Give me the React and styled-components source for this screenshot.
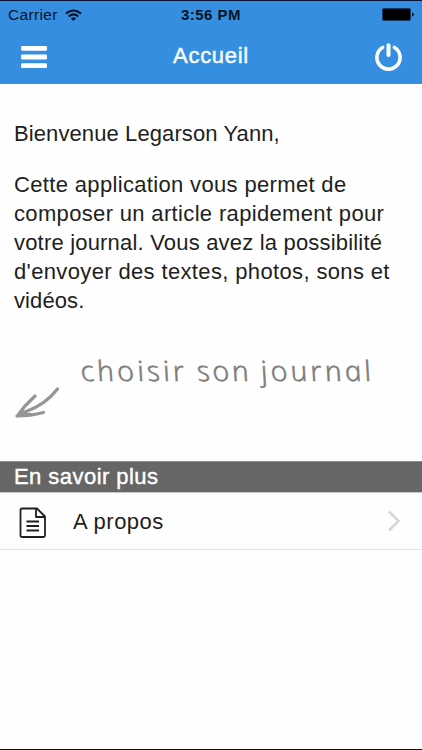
import React from "react";
import styled, { createGlobalStyle } from "styled-components";

const GlobalStyle = createGlobalStyle`
    * {
        box-sizing: border-box;
    }

    body {
        margin: 0;
        background: #fefefe;
        color: #1f1f21;
        font-family: "Liberation Sans", Arial, sans-serif;
    }
`

const Screen = styled.div`
    display: flex;
    flex-direction: column;
    width: 422px;
    height: 750px;
    overflow: hidden;
    border-top: 1px solid #07123a;
    border-bottom: 1px solid #111;
`

const Header = styled.header`
    height: 83px;
    background: #368ee0;
`

const StatusBar = styled.div`
    display: grid;
    grid-template-columns: 1fr auto 1fr;
    align-items: center;
    height: 28px;
    padding: 0 8px;
    color: #071426;
    font-size: 15.5px;
`

const Carrier = styled.div`
    display: flex;
    align-items: center;
    gap: 7px;
    letter-spacing: .35px;
`

const Clock = styled.div`
    padding-bottom: 1px;
    font-weight: bold;
    font-size: 15px;
    letter-spacing: .5px;
`

const Battery = styled.svg`
    justify-self: end;
    margin-bottom: 2px;
`

const NavBar = styled.div`
    display: flex;
    align-items: center;
    justify-content: space-between;
    height: 55px;
    padding: 0 19px 0 20px;
`

const NavButton = styled.button`
    display: flex;
    padding: 0;
    border: 0;
    background: none;
`

const Title = styled.h1`
    margin: 0;
    padding-bottom: 2px;
    color: #f5fbff;
    font-size: 22px;
    font-weight: 400;
    letter-spacing: .7px;
    -webkit-text-stroke: .5px #f5fbff;
`

const Intro = styled.section`
    height: 262px;
    padding: 35px 14px 0;
    font-size: 22px;
    line-height: 29px;
    white-space: nowrap;
`

const Paragraph = styled.p`
    margin: 0 0 22px;
`

const Line = styled.span`
    display: block;
    letter-spacing: ${({spacing}) => spacing}px;
`

const Hint = styled.div`
    display: flex;
    align-items: flex-start;
    height: 115px;
    padding-left: 14px;
`

const Arrow = styled.svg`
    flex: none;
    margin-top: 39px;
`

const HintText = styled.div`
    display: flex;
    gap: 8px;
    margin: 5px 0 0 21px;
    color: #7d7d7d;
    font-family: "Open Sans", sans-serif;
    font-size: 25px;
    font-style: italic;
    font-weight: 300;
    line-height: 40px;
    white-space: nowrap;
    transform: scale(1.2, 1.12) skewX(15deg);
    transform-origin: 0 70%;
    -webkit-text-stroke: .5px #7d7d7d;
`

const Word = styled.span`
    letter-spacing: ${({spacing}) => spacing}px;
`

const SectionTitle = styled.h2`
    height: 32px;
    margin: 0;
    padding-left: 14px;
    border-top: 1px solid #929292;
    border-bottom: 1px solid #c8c8c8;
    background: #666;
    color: #fff;
    font-size: 22px;
    font-weight: 400;
    line-height: 30px;
    letter-spacing: .45px;
    -webkit-text-stroke: .4px #fff;
`

const Row = styled.div`
    display: flex;
    align-items: center;
    height: 57px;
    padding: 0 21px 0 19px;
    border-bottom: 1px solid #e4e4e4;
`

const RowLabel = styled.span`
    flex: 1;
    margin-left: 26px;
    padding-top: 1px;
    font-size: 22px;
    letter-spacing: .5px;
`

const DocIcon = styled.svg`
    margin-top: 4px;
`

const WifiIcon = () => (
    <svg width="17" height="13" viewBox="0 0 17 13" fill="none" stroke="#071426" strokeWidth="2">
        <path d="M1 4.6Q8.5 -1.5 16 4.6M3.7 7.4Q8.5 3.3 13.3 7.4" />
        <path d="M5.9 9.4Q8.5 7.2 11.1 9.4L8.5 12Z" fill="#071426" stroke="none" />
    </svg>
)

const BatteryIcon = () => (
    <Battery width="32" height="13" viewBox="0 0 32 13">
        <rect x="0" y="0" width="29" height="13" rx="2" fill="#123865" />
        <rect x="1" y="1" width="27" height="11" rx="1" fill="#000" />
        <path d="M30 4.5Q32 5 32 6.5T30 8.5Z" fill="#071426" />
    </Battery>
)

const MenuIcon = () => (
    <svg width="28" height="24" viewBox="0 0 28 24" fill="#fff">
        <rect x="1" y="1" width="26" height="4.8" rx="1.2" />
        <rect x="1" y="9.6" width="26" height="4.8" rx="1.2" />
        <rect x="1" y="18.2" width="26" height="4.8" rx="1.2" />
    </svg>
)

const PowerIcon = () => (
    <svg width="29" height="29" viewBox="0 0 29 29" fill="none" stroke="#fff" strokeLinecap="round">
        <path d="M8.6 5.5A11.6 11.6 0 1 0 20.4 5.5" strokeWidth="3.6" />
        <path d="M14.5 3.2V13" strokeWidth="4" />
    </svg>
)

const DocumentIcon = () => (
    <DocIcon width="28" height="32" viewBox="0 0 28 32" fill="none" stroke="#1f1f21" strokeWidth="1.8" strokeLinejoin="round">
        <path d="M3 1.5H18L26 9.5V28.5Q26 30 24.5 30H3Q1.5 30 1.5 28.5V3Q1.5 1.5 3 1.5Z" />
        <path d="M17 2V10H25.5" />
        <path d="M7.5 14.5H20M7.5 19H20M7.5 23.5H20" />
    </DocIcon>
)

const ArrowIcon = () => (
    <Arrow width="47" height="36" viewBox="0 0 47 36" fill="none" stroke="#969696" strokeWidth="3.2" strokeLinecap="round" strokeLinejoin="round">
        <path d="M43.5 4Q31 20 12 26.5L3 31M21 11L11 21Q6 27 3.5 31Q16 31 29.5 27.5" />
        <path d="M2 32L11 22L9 27.5L19 28L14 32Z" fill="#969696" stroke="none" />
    </Arrow>
)

export default class App extends React.Component {
    render () {
        return (
            <Screen>
                <GlobalStyle />
                <Header>
                    <StatusBar>
                        <Carrier>Carrier <WifiIcon /></Carrier>
                        <Clock>3:56 PM</Clock>
                        <BatteryIcon />
                    </StatusBar>
                    <NavBar>
                        <NavButton aria-label="Menu"><MenuIcon /></NavButton>
                        <Title>Accueil</Title>
                        <NavButton aria-label="Quitter"><PowerIcon /></NavButton>
                    </NavBar>
                </Header>
                <Intro>
                    <Paragraph>
                        <Line spacing={.1}>Bienvenue Legarson Yann,</Line>
                    </Paragraph>
                    <Paragraph>
                        <Line spacing={.34}>Cette application vous permet de</Line>
                        <Line spacing={.34}>composer un article rapidement pour</Line>
                        <Line spacing={.19}>votre journal. Vous avez la possibilité</Line>
                        <Line spacing={.36}>d'envoyer des textes, photos, sons et</Line>
                        <Line spacing={.1}>vidéos.</Line>
                    </Paragraph>
                </Intro>
                <Hint>
                    <ArrowIcon />
                    <HintText>
                        <Word spacing={2.6}>choisir</Word>
                        <Word spacing={2.1}>son</Word>
                        <Word spacing={2.5}>journal</Word>
                    </HintText>
                </Hint>
                <SectionTitle>En savoir plus</SectionTitle>
                <Row>
                    <DocumentIcon />
                    <RowLabel>A propos</RowLabel>
                    <svg width="14" height="22" viewBox="0 0 14 22" fill="none" stroke="#d6d6d6" strokeWidth="2.6">
                        <path d="M2 1.5L11.5 11L2 20.5" />
                    </svg>
                </Row>
            </Screen>
        )
    }
}
